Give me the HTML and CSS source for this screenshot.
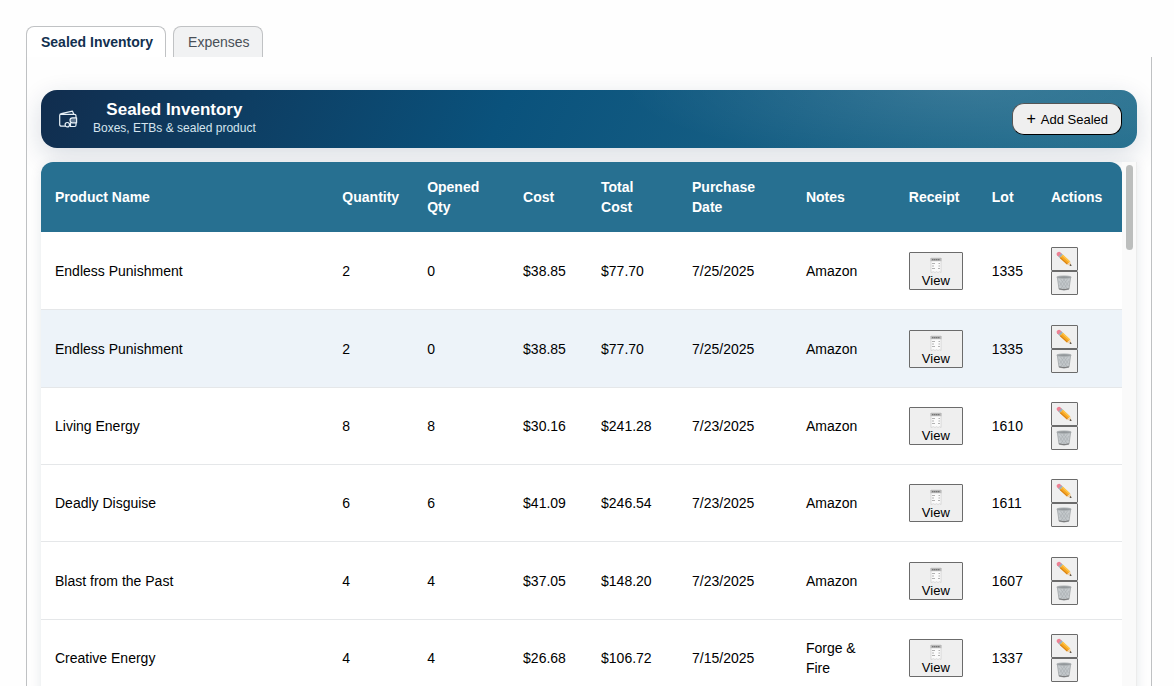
FILE: index.html
```html
<!DOCTYPE html>
<html lang="en">
<head>
<meta charset="utf-8">
<meta name="viewport" content="width=device-width, initial-scale=1">
<title>Sealed Inventory</title>
<link rel="stylesheet" href="styles.css">
</head>
<body>
<svg class="sprite" aria-hidden="true">
  <symbol id="receipt" viewBox="0 0 14 16">
    <path d="M2 1h10v14.500l-1.500-.8-1.500.8-1.500-.8-1.500.8-1.500-.8-2.500.8z" fill="#fbfbfb" stroke="#cfcfcf" stroke-width=".7"/>
    <path d="M1.500 1h11v3.200h-11z" fill="#b9b9b9"/>
    <path d="M3 2.600h8" stroke="#777" stroke-width="1.200" stroke-dasharray="1.500 .5"/>
    <path d="M3 6.500h3M3 9h2M3 11.500h3M9.500 6.500H11M9.500 9H11M9 11.500h2" stroke="#aaa" stroke-width=".9"/>
  </symbol>
  <symbol id="pencil" viewBox="0 0 16 16">
    <path d="M4 .9 6 2.900 3 6 1 4.200Q0 2.900 1.300 1.600 2.700 .2 4 .9z" fill="#ee8194"/>
    <path d="M5.400 2.300 7 3.700 3.800 7 2.300 5.500z" fill="#9fb0b8"/>
    <path d="M7 3.700 14.200 10.400 11 13.600 3.800 7z" fill="#f6a623"/>
    <path d="M7 3.700 14.200 10.400 13.200 11.400 6 4.700z" fill="#ffc64a"/>
    <path d="M4.600 6.200 11.800 12.800 11 13.600 3.800 7z" fill="#d98212"/>
    <path d="M14.200 10.400 15.500 15 11 13.600z" fill="#f0cfa0"/>
    <path d="M14.900 13 15.500 15 13.500 14.400z" fill="#333"/>
  </symbol>
  <symbol id="trash" viewBox="0 0 16 16">
    <path d="M1.300 2 3 14.200Q8 16 13 14.200L14.700 2z" fill="#c4c9cc" stroke="#999ea1" stroke-width=".7"/>
    <path d="M4.500 4 11.500 14M7.500 4l5 7M3 6l5.500 8.500M11.500 4l-7 10M8.500 4l-5 7M13 6l-5.500 8.500" stroke="#a8adb0" stroke-width=".6"/>
    <path d="M3.200 13.800Q8 15.600 12.800 13.800" fill="none" stroke="#777" stroke-width="1"/>
    <ellipse cx="8" cy="2.200" rx="7.200" ry="1.300" fill="#92979a" stroke="#abb0b3" stroke-width=".8"/>
  </symbol>
</svg>

<main class="page">
  <div class="tabs" role="tablist">
    <button class="tab tab-active" type="button" role="tab" aria-selected="true">Sealed Inventory</button>
    <button class="tab" type="button" role="tab" aria-selected="false">Expenses</button>
  </div>
  <section class="panel">
    <header class="banner">
      <svg class="wallet" viewBox="0 0 20 20" fill="none" stroke="#e8f1f7" stroke-width="1.200" stroke-linecap="round" stroke-linejoin="round" aria-hidden="true">
        <path d="M7 17.200H3.500Q1.700 17.200 1.700 15.500V6.600Q1.700 5 3.300 4.700L14.500 2.200 15.600 4.800M2.500 5.300H16.500Q18 5.300 18 6.800V8.500"/>
        <path d="M18.600 8.800H14.500a2.500 2.500 0 0 0 0 5h4.100z" fill="#e8f1f7" fill-opacity=".35"/>
        <circle cx="9.300" cy="15.700" r="2.200"/>
        <path d="M12.500 13.800v3.700h4.200Q18 17.500 18 16V13.800"/>
      </svg>
      <div class="heading">
        <h1>Sealed Inventory</h1>
        <p>Boxes, ETBs &amp; sealed product</p>
      </div>
      <button class="add" type="button"><span class="plus">+</span> Add Sealed</button>
    </header>
    <div class="table-area">
      <table class="inventory">
        <colgroup><col class="c-name"><col class="c-qty"><col class="c-opened"><col class="c-cost"><col class="c-total"><col class="c-date"><col class="c-notes"><col class="c-receipt"><col class="c-lot"><col class="c-actions"></colgroup>
        <thead>
          <tr><th>Product Name</th><th>Quantity</th><th>Opened Qty</th><th>Cost</th><th>Total Cost</th><th>Purchase Date</th><th>Notes</th><th>Receipt</th><th>Lot</th><th>Actions</th></tr>
        </thead>
        <tbody>
          <tr><td>Endless Punishment</td><td>2</td><td>0</td><td>$38.85</td><td>$77.70</td><td>7/25/2025</td><td>Amazon</td>
            <td><button class="view" type="button"><svg><use href="#receipt"/></svg>View</button></td><td>1335</td>
            <td><div class="actions"><button type="button" aria-label="Edit"><svg><use href="#pencil"/></svg></button><button type="button" aria-label="Delete"><svg><use href="#trash"/></svg></button></div></td></tr>
          <tr class="highlighted"><td>Endless Punishment</td><td>2</td><td>0</td><td>$38.85</td><td>$77.70</td><td>7/25/2025</td><td>Amazon</td>
            <td><button class="view" type="button"><svg><use href="#receipt"/></svg>View</button></td><td>1335</td>
            <td><div class="actions"><button type="button" aria-label="Edit"><svg><use href="#pencil"/></svg></button><button type="button" aria-label="Delete"><svg><use href="#trash"/></svg></button></div></td></tr>
          <tr><td>Living Energy</td><td>8</td><td>8</td><td>$30.16</td><td>$241.28</td><td>7/23/2025</td><td>Amazon</td>
            <td><button class="view" type="button"><svg><use href="#receipt"/></svg>View</button></td><td>1610</td>
            <td><div class="actions"><button type="button" aria-label="Edit"><svg><use href="#pencil"/></svg></button><button type="button" aria-label="Delete"><svg><use href="#trash"/></svg></button></div></td></tr>
          <tr><td>Deadly Disguise</td><td>6</td><td>6</td><td>$41.09</td><td>$246.54</td><td>7/23/2025</td><td>Amazon</td>
            <td><button class="view" type="button"><svg><use href="#receipt"/></svg>View</button></td><td>1611</td>
            <td><div class="actions"><button type="button" aria-label="Edit"><svg><use href="#pencil"/></svg></button><button type="button" aria-label="Delete"><svg><use href="#trash"/></svg></button></div></td></tr>
          <tr><td>Blast from the Past</td><td>4</td><td>4</td><td>$37.05</td><td>$148.20</td><td>7/23/2025</td><td>Amazon</td>
            <td><button class="view" type="button"><svg><use href="#receipt"/></svg>View</button></td><td>1607</td>
            <td><div class="actions"><button type="button" aria-label="Edit"><svg><use href="#pencil"/></svg></button><button type="button" aria-label="Delete"><svg><use href="#trash"/></svg></button></div></td></tr>
          <tr><td>Creative Energy</td><td>4</td><td>4</td><td>$26.68</td><td>$106.72</td><td>7/15/2025</td><td>Forge &amp; Fire</td>
            <td><button class="view" type="button"><svg><use href="#receipt"/></svg>View</button></td><td>1337</td>
            <td><div class="actions"><button type="button" aria-label="Edit"><svg><use href="#pencil"/></svg></button><button type="button" aria-label="Delete"><svg><use href="#trash"/></svg></button></div></td></tr>
        </tbody>
      </table>
      <div class="track" aria-hidden="true"><div class="thumb"></div></div>
    </div>
  </section>
</main>
</body>
</html>
```
FILE: styles.css
```css
* { box-sizing: border-box; }

body {
  margin: 0;
  background: #fefefe;
  color: #000;
  font: 14px/20px "Liberation Sans", Arial, sans-serif;
}

button { font-family: inherit; color: inherit; }

.sprite { display: none; }

.page {
  display: flex;
  flex-direction: column;
  height: 100vh;
  overflow: hidden;
  padding: 26px 22px 0 26px;
}

.tabs { display: flex; gap: 7px; }

.tab {
  height: 31px;
  padding: 0 12px 0 14px;
  border: 1px solid #c0c2c4;
  border-bottom: 0;
  border-radius: 8px 8px 0 0;
  background: #f1f2f3;
  color: #495057;
  font-size: 14px;
}

.tab-active {
  background: #fff;
  color: #12304f;
  font-weight: bold;
}

.panel {
  flex: 1;
  min-height: 0;
  overflow: hidden;
  padding: 33px 14px 0;
  border: solid #bfc1c3;
  border-width: 0 1px;
}

.banner {
  display: flex;
  align-items: center;
  height: 58px;
  padding: 0 15px 0 17px;
  border-radius: 16px;
  background:
    radial-gradient(ellipse 340px 80px at 84% -10%, rgba(255, 255, 255, .12), transparent),
    linear-gradient(115deg, #112d4e, #0a527c 42%, #26708f);
  box-shadow: 0 8px 26px rgba(17, 45, 78, .16);
  color: #fff;
}

.wallet { width: 20px; height: 20px; }

.heading {
  margin-left: 15px;
  padding-bottom: 2px;
  text-align: center;
}

.heading h1 {
  margin: 0;
  font-size: 17px;
  line-height: 20px;
}

.heading p {
  margin: 0;
  color: #d5e5ef;
  font-size: 12px;
  line-height: 16px;
}

.add {
  display: flex;
  align-items: center;
  gap: 5px;
  height: 32px;
  margin-left: auto;
  padding: 0 13px;
  border: 1px solid;
  border-color: #555 #000 #000 #555;
  border-radius: 12px;
  background: #efefef;
  color: #000;
  font-size: 13px;
}

.plus { font-size: 16px; }

.table-area {
  display: flex;
  margin-top: 14px;
  border-radius: 12px 0 0 0;
  box-shadow: 0 2px 12px rgba(17, 45, 78, .1);
}

/* Column widths are shares of the table, which spans the panel. */
.inventory {
  flex: 1;
  min-width: 0;
  table-layout: fixed;
  border-collapse: separate;
  border-spacing: 0;
}

.c-name { width: 288px; }
.c-qty { width: 84px; }
.c-opened { width: 96px; }
.c-cost { width: 78px; }
.c-total { width: 91px; }
.c-date { width: 114px; }
.c-notes { width: 103px; }
.c-receipt { width: 83px; }
.c-lot { width: 59px; }
.c-actions { width: 85px; }

th, td {
  padding: 14px;
  border-bottom: 1px solid #e5e7e9;
  text-align: left;
}

th {
  height: 71px;
  background: #277091;
  color: #fff;
  border-bottom-color: #fff;
}

th:first-child { border-radius: 12px 0 0 0; }
th:last-child { border-radius: 0 12px 0 0; }

td { height: 77px; background: #fff; }
tr:nth-child(3n + 2) td { height: 78px; }
.highlighted td { background: #edf3f9; }

.view {
  display: flex;
  flex-direction: column;
  align-items: center;
  width: 54px;
  height: 38px;
  padding: 4px 0 0;
  border: 1px solid #6b6b6b;
  border-radius: 1px;
  background: #efefef;
  font-size: 13px;
  line-height: 16px;
}

.view svg { width: 14px; height: 16px; }

.actions { display: flex; flex-direction: column; width: 27px; }

.actions button {
  display: flex;
  align-items: center;
  justify-content: center;
  height: 24px;
  padding: 0;
  border: 1px solid #6b6b6b;
  border-radius: 1px;
  background: #efefef;
}

.actions svg { width: 16px; height: 16px; }

.track {
  flex: none;
  width: 15px;
  padding: 3px 3px 0 4px;
  background: #fafafa;
  border-right: 1px solid #ececec;
}

.thumb { height: 85px; border-radius: 4px; background: #bcbebd; }
```
